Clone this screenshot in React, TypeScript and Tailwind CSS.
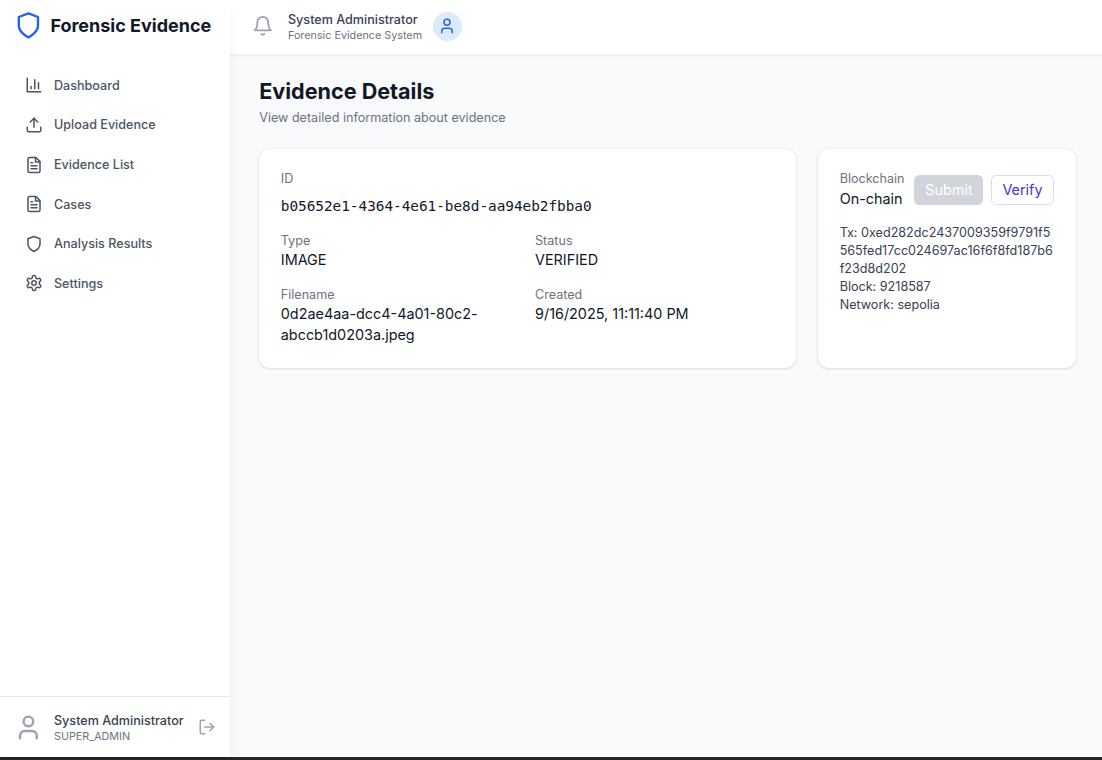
import React from 'react';
import { LogOut, Upload, User } from 'lucide-react';

type IconProps = { className?: string };

function Icon({ className, children }: IconProps & { children: React.ReactNode }) {
  return (
    <svg
      className={className}
      viewBox="0 0 24 24"
      fill="none"
      stroke="currentColor"
      strokeWidth="2"
      strokeLinecap="round"
      strokeLinejoin="round"
    >
      {children}
    </svg>
  );
}

function Shield({ className }: IconProps) {
  return (
    <Icon className={className}>
      <path d="M12 22s8-4 8-10V5l-8-3-8 3v7c0 6 8 10 8 10" />
    </Icon>
  );
}

function BarChart({ className }: IconProps) {
  return (
    <Icon className={className}>
      <path d="M3 3v18h18" />
      <path d="M18 17V9" />
      <path d="M13 17V5" />
      <path d="M8 17v-3" />
    </Icon>
  );
}

function FileText({ className }: IconProps) {
  return (
    <Icon className={className}>
      <path d="M14.5 2H6a2 2 0 0 0-2 2v16a2 2 0 0 0 2 2h12a2 2 0 0 0 2-2V7.5L14.5 2z" />
      <path d="M14 2v6h6" />
      <path d="M16 13H8" />
      <path d="M16 17H8" />
      <path d="M10 9H8" />
    </Icon>
  );
}

function Settings({ className }: IconProps) {
  return (
    <Icon className={className}>
      <path d="M12.22 2h-.44a2 2 0 0 0-2 2v.18a2 2 0 0 1-1 1.73l-.43.25a2 2 0 0 1-2 0l-.15-.08a2 2 0 0 0-2.73.73l-.22.38a2 2 0 0 0 .73 2.73l.15.1a2 2 0 0 1 1 1.72v.51a2 2 0 0 1-1 1.74l-.15.09a2 2 0 0 0-.73 2.73l.22.38a2 2 0 0 0 2.73.73l.15-.08a2 2 0 0 1 2 0l.43.25a2 2 0 0 1 1 1.73V20a2 2 0 0 0 2 2h.44a2 2 0 0 0 2-2v-.18a2 2 0 0 1 1-1.73l.43-.25a2 2 0 0 1 2 0l.15.08a2 2 0 0 0 2.73-.73l.22-.39a2 2 0 0 0-.73-2.73l-.15-.08a2 2 0 0 1-1-1.74v-.5a2 2 0 0 1 1-1.74l.15-.09a2 2 0 0 0 .73-2.73l-.22-.38a2 2 0 0 0-2.73-.73l-.15.08a2 2 0 0 1-2 0l-.43-.25a2 2 0 0 1-1-1.73V4a2 2 0 0 0-2-2z" />
      <circle cx="12" cy="12" r="3" />
    </Icon>
  );
}

function Bell({ className }: IconProps) {
  return (
    <Icon className={className}>
      <path d="M6 8a6 6 0 0 1 12 0c0 7 3 9 3 9H3s3-2 3-9" />
      <path d="M10.3 21a1.94 1.94 0 0 0 3.4 0" />
    </Icon>
  );
}

const navigation = [
  { name: 'Dashboard', icon: BarChart },
  { name: 'Upload Evidence', icon: Upload },
  { name: 'Evidence List', icon: FileText },
  { name: 'Cases', icon: FileText },
  { name: 'Analysis Results', icon: Shield },
  { name: 'Settings', icon: Settings },
];

function Sidebar() {
  return (
    <aside className="relative z-10 flex w-64 shrink-0 flex-col bg-white shadow-lg">
      <div className="flex h-[61.4px] items-center gap-2 px-4 pb-[3.6px]">
        <Shield className="mb-px size-8 text-[#2563eb]" />
        <span className="whitespace-nowrap text-xl font-bold text-[#111827]">Forensic Evidence</span>
      </div>
      <nav className="flex flex-1 flex-col gap-2 px-4 py-4">
        {navigation.map(({ name, icon: NavIcon }) => (
          <a key={name} className="flex h-9 items-center gap-3 rounded-lg px-3 text-sm font-medium text-[#4b5563]">
            <NavIcon className="mb-px size-5" />
            {name}
          </a>
        ))}
      </nav>
      <div className="flex h-[67.6px] items-center border-t border-[#e5e7eb] px-4 pt-0.5">
        <User className="size-8 shrink-0 text-[#9ca3af]" />
        <div className="ml-3 flex-1">
          <p className="whitespace-nowrap text-sm font-medium text-[#374151]">System Administrator</p>
          <p className="text-xs text-[#6b7280]">SUPER_ADMIN</p>
        </div>
        <LogOut className="mb-px size-5 shrink-0 text-[#9ca3af]" />
      </div>
    </aside>
  );
}

function Header() {
  return (
    <header className="flex h-[61.6px] shrink-0 items-center border-b border-[#f3f4f6] bg-white px-6 pb-[2.2px] shadow-xs">
      <Bell className="size-6 text-[#9ca3af]" />
      <div className="ml-4 pt-[2px]">
        <p className="text-sm font-medium text-[#374151]">System Administrator</p>
        <p className="text-xs text-[#6b7280]">Forensic Evidence System</p>
      </div>
      <div className="ml-3 flex size-8 items-center justify-center rounded-full bg-[#dbeafe]">
        <User className="size-5 text-[#2563eb]" />
      </div>
    </header>
  );
}

function Field({ label, value }: { label: string; value: string }) {
  return (
    <div>
      <div className="text-sm text-[#6b7280]">{label}</div>
      <div className="-mt-[0.4px] leading-[23.4px]">{value}</div>
    </div>
  );
}

export default function App() {
  return (
    <div className="bg-[#272727] pb-[3.5px] font-['Inter',sans-serif] text-[#111827] [zoom:0.9]">
      <div className="flex h-[841px] bg-[#f9fafb]">
        <Sidebar />
        <div className="flex min-w-0 flex-1 flex-col">
          <Header />
          <main className="py-6 pr-[29px] pl-8">
            <h1 className="text-2xl font-bold">Evidence Details</h1>
            <p className="mt-1 text-sm text-[#6b7280]">View detailed information about evidence</p>
            <div className="mt-6 grid grid-cols-3 gap-6">
              <section className="col-span-2 h-[243px] rounded-xl bg-white p-6 pt-[23.4px] shadow-sm">
                <div className="text-sm text-[#6b7280]">ID</div>
                <div className="mt-[8.6px] font-['DejaVu_Sans_Mono',monospace] tracking-[-0.032px]">
                  b05652e1-4364-4e61-be8d-aa94eb2fbba0
                </div>
                <div className="mt-4 grid grid-cols-2 gap-x-4 gap-y-[17px]">
                  <Field label="Type" value="IMAGE" />
                  <Field label="Status" value="VERIFIED" />
                  <Field label="Filename" value="0d2ae4aa-dcc4-4a01-80c2-abccb1d0203a.jpeg" />
                  <Field label="Created" value="9/16/2025, 11:11:40 PM" />
                </div>
              </section>
              <section className="rounded-xl bg-white p-6 pt-[23.4px] shadow-sm">
                <div className="flex h-11 items-center justify-between">
                  <div>
                    <div className="text-sm text-[#6b7280]">Blockchain</div>
                    <div className="pt-[0.5px]">On-chain</div>
                  </div>
                  <div className="flex h-[33.6px] gap-2 pt-[0.6px]">
                    <button className="rounded-md bg-[#d1d5db] px-3 text-white">Submit</button>
                    <button className="rounded-md border border-[#d5dcfe] px-3 text-[#4338ca]">Verify</button>
                  </div>
                </div>
                <div className="mt-[16.1px] text-sm text-[#374151]">
                  <div className="break-all">
                    Tx: 0xed282dc2437009359f9791f5565fed17cc024697ac16f6f8fd187b6f23d8d202
                  </div>
                  <div>Block: 9218587</div>
                  <div>Network: sepolia</div>
                </div>
              </section>
            </div>
          </main>
        </div>
      </div>
    </div>
  );
}
